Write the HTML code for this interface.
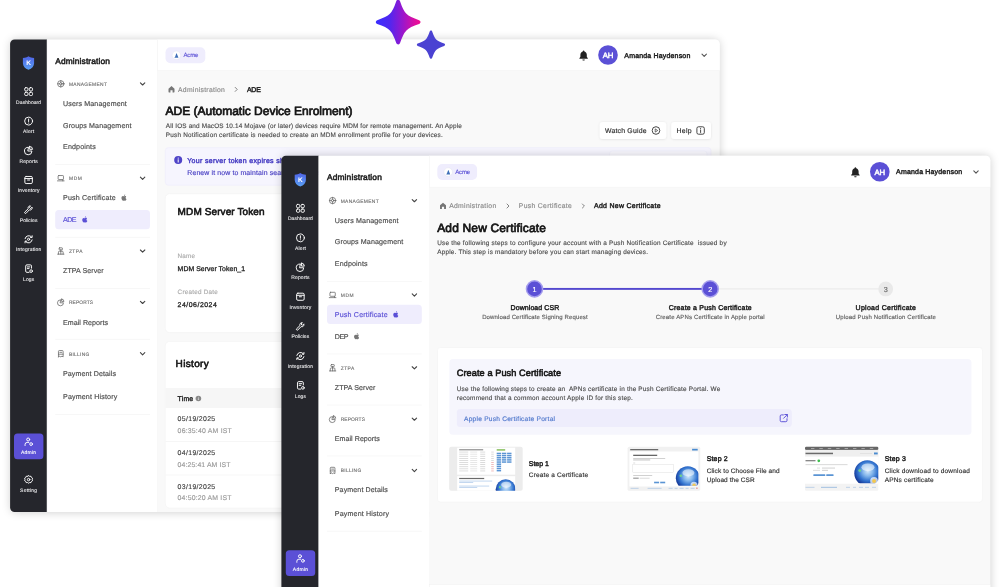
<!DOCTYPE html>
<html lang="en"><head><meta charset="utf-8"><title>Administration</title><style>
*{margin:0;padding:0;}
html,body{width:1000px;height:587px;overflow:hidden;background:#fff;}
body{position:relative;font-family:"Liberation Sans", sans-serif;}
.card{position:absolute;overflow:hidden;}
.sh{position:absolute;border-radius:4.5px;box-shadow:0 0 10px rgba(0,0,0,0.21);}
.tx{position:absolute;left:0;top:0;font-family:"Liberation Sans", sans-serif;text-rendering:geometricPrecision;will-change:transform;} .tx text{white-space:pre;}
.spark{position:absolute;}
svg{display:block;} .tx svg{overflow:visible;}
</style></head><body>
<div class="sh" style="left:10.6px;top:40.0px;width:708.6px;height:471.5px;"></div><div class="card" style="left:9px;top:38px;width:712px;height:475px;"><svg class="tx" width="712" height="475" viewBox="0 0 712 475">
<defs><filter id="bsh" x="-20%" y="-40%" width="140%" height="200%"><feDropShadow dx="0" dy="0.4" stdDeviation="1.1" flood-color="#000" flood-opacity="0.1"/></filter></defs><clipPath id="clipa"><rect x="1.1" y="1.5" width="709.6" height="472.5" rx="4.5"/></clipPath><g clip-path="url(#clipa)">
<rect x="-1" y="-1" width="39" height="477" fill="#25262c" />
<rect x="38" y="-1" width="110.5" height="477" fill="#fff" stroke="#efefef" stroke-width="0.5"/>
<rect x="148.5" y="-1" width="567.5" height="477" fill="#f9f9f9" />
<rect x="148.5" y="-1" width="567.5" height="33.4" fill="#fff" stroke="#f3f3f3" stroke-width="0.5"/>
<svg x="13.5" y="18.0" width="12" height="14" viewBox="0 0 12 14" ><defs><linearGradient id="lga" x1="0" y1="0" x2="0" y2="1"><stop offset="0" stop-color="#4f63e6"/><stop offset="1" stop-color="#5aa0f5"/></linearGradient></defs><path d="M6 .3c1.600 1 3.400 1.500 5.600 1.600v5.300c0 3-2.200 5.300-5.600 6.500C2.600 12.500.4 10.200.4 7.200V1.900C2.600 1.800 4.400 1.300 6 .3z" fill="url(#lga)"/></svg>
<svg x="14.6" y="48.6" width="10" height="10" viewBox="0 0 24 24" ><g stroke="#fff" fill="none" stroke-width="2.3" stroke-linecap="round" stroke-linejoin="round"><rect x="2.600" y="2.600" width="7.800" height="7.800" rx="2.600"/><rect x="13.600" y="2.600" width="7.800" height="7.800" rx="2.600"/><rect x="2.600" y="13.600" width="7.800" height="7.800" rx="2.600"/><rect x="13.600" y="13.600" width="7.800" height="7.800" rx="2.600"/></g></svg>
<svg x="14.6" y="78.1" width="10" height="10" viewBox="0 0 24 24" ><g stroke="#fff" fill="none" stroke-width="2.3" stroke-linecap="round" stroke-linejoin="round"><circle cx="12" cy="12" r="9.5"/><path d="M12 7v6"/><path d="M12 16.6v.2"/></g></svg>
<svg x="14.6" y="107.4" width="10" height="10" viewBox="0 0 24 24" ><g stroke="#fff" fill="none" stroke-width="2.3" stroke-linecap="round" stroke-linejoin="round"><path d="M11 4.5a9 9 0 1 0 9 9h-9z"/><path d="M14.5 2.5v7h7a7 7 0 0 0-7-7z"/></g></svg>
<svg x="14.6" y="137.0" width="10" height="10" viewBox="0 0 24 24" ><g stroke="#fff" fill="none" stroke-width="2.3" stroke-linecap="round" stroke-linejoin="round"><rect x="3" y="3.5" width="18" height="17" rx="3"/><path d="M3 8.5h18"/><path d="M9.500 12h5"/></g></svg>
<svg x="14.6" y="166.8" width="10" height="10" viewBox="0 0 24 24" ><g stroke="#fff" fill="none" stroke-width="2.3" stroke-linecap="round" stroke-linejoin="round"><path d="M20.5 6.5a5 5 0 0 1-6.8 5.6l-7.6 8a2 2 0 0 1-3-3l8-7.6a5 5 0 0 1 5.6-6.8l-3 3.2 2.4 2.6z"/></g></svg>
<svg x="14.6" y="196.3" width="10" height="10" viewBox="0 0 24 24" ><g stroke="#fff" fill="none" stroke-width="2.3" stroke-linecap="round" stroke-linejoin="round"><path d="M3.5 10.5a9 9 0 0 1 16-3.5"/><path d="M20.5 3.5v4h-4"/><path d="M20.5 13.5a9 9 0 0 1-16 3.5"/><path d="M3.5 20.5v-4h4"/><circle cx="12" cy="12" r="2.6"/></g></svg>
<svg x="14.6" y="225.6" width="10" height="10" viewBox="0 0 24 24" ><g stroke="#fff" fill="none" stroke-width="2.3" stroke-linecap="round" stroke-linejoin="round"><path d="M19 11V6a3 3 0 0 0-3-3H8a3 3 0 0 0-3 3v12a3 3 0 0 0 3 3h5"/><path d="M9 8h6"/><path d="M9 12h4"/><circle cx="18" cy="18" r="3.2"/></g></svg>
<rect x="5" y="395.6" width="29.4" height="25.6" rx="3.5" fill="#5b50d6" />
<svg x="14.6" y="398.8" width="10" height="10" viewBox="0 0 24 24" ><g stroke="#fff" fill="none" stroke-width="2.3" stroke-linecap="round" stroke-linejoin="round"><circle cx="11" cy="6.5" r="3.6"/><path d="M3.5 21v-2.5a5 5 0 0 1 5-5h4"/><circle cx="18" cy="17.5" r="3.3"/></g></svg>
<svg x="14.6" y="436.6" width="10" height="10" viewBox="0 0 24 24" ><g stroke="#fff" fill="none" stroke-width="2.3" stroke-linecap="round" stroke-linejoin="round"><path d="M12 2.5l2.6 1.7 3.1-.2 1.2 2.9 2.6 1.7-.8 3 .8 3-2.6 1.7-1.2 2.9-3.1-.2-2.6 1.7-2.6-1.7-3.1.2-1.2-2.9-2.6-1.7.8-3-.8-3 2.6-1.700 1.200-2.900 3.100.200z"/><circle cx="12" cy="12" r="3"/></g></svg>
<svg x="47.8" y="41.8" width="8" height="8" viewBox="0 0 24 24" ><g stroke="#666" fill="none" stroke-width="2.3" stroke-linecap="round" stroke-linejoin="round"><circle cx="12" cy="12" r="9.5"/><circle cx="12" cy="12" r="3.5"/><path d="M12 2.500v6M12 15.500v6M2.500 12h6M15.500 12h6"/></g></svg>
<svg x="128.6" y="40.8" width="10" height="10" viewBox="0 0 10 10" ><path d="M2.800 4l2.200 2.200L7.200 4" stroke="#444" stroke-width="1.100" fill="none" stroke-linecap="round" stroke-linejoin="round"/></svg>
<rect x="46.2" y="126.2" width="94.8" height="0.6" fill="#f2f2f2" />
<svg x="47.8" y="136.2" width="8" height="8" viewBox="0 0 24 24" ><g stroke="#666" fill="none" stroke-width="2.3" stroke-linecap="round" stroke-linejoin="round"><rect x="4" y="4" width="16" height="12" rx="2"/><path d="M2 20h20"/><path d="M18 16v4"/></g></svg>
<svg x="128.6" y="135.2" width="10" height="10" viewBox="0 0 10 10" ><path d="M2.800 4l2.200 2.200L7.200 4" stroke="#444" stroke-width="1.100" fill="none" stroke-linecap="round" stroke-linejoin="round"/></svg>
<svg x="111.9" y="156.2" width="6.6" height="6.6" viewBox="2 2 20 20" ><path d="M16.400 12.600c0-2.300 1.900-3.400 2-3.500-1.100-1.600-2.800-1.800-3.400-1.800-1.400-.1-2.800.9-3.500.9-.7 0-1.900-.8-3.100-.8-1.600 0-3.100.9-3.900 2.400-1.700 2.900-.4 7.200 1.200 9.500.8 1.200 1.700 2.400 3 2.400 1.200 0 1.600-.8 3.100-.8 1.400 0 1.800.8 3.100.8 1.300 0 2.100-1.200 2.900-2.300.9-1.300 1.300-2.600 1.300-2.700-.1 0-2.700-1-2.700-4.100zM14.100 5.600c.6-.8 1.100-1.900 1-3-.9 0-2.100.6-2.800 1.400-.6.700-1.100 1.800-1 2.900 1.100.1 2.100-.5 2.800-1.300z" fill="#777"/></svg>
<rect x="46.2" y="172.0" width="94.8" height="19.2" rx="3.5" fill="#efedfd" />
<svg x="72.7" y="178.1" width="6.6" height="6.6" viewBox="2 2 20 20" ><path d="M16.400 12.600c0-2.300 1.900-3.400 2-3.500-1.100-1.600-2.800-1.800-3.400-1.800-1.400-.1-2.800.9-3.500.9-.7 0-1.900-.8-3.100-.8-1.600 0-3.100.9-3.900 2.400-1.700 2.900-.4 7.200 1.200 9.500.8 1.200 1.700 2.400 3 2.400 1.200 0 1.600-.8 3.100-.8 1.400 0 1.800.8 3.100.8 1.300 0 2.100-1.200 2.900-2.300.9-1.300 1.300-2.600 1.300-2.700-.1 0-2.700-1-2.700-4.100zM14.100 5.600c.6-.8 1.100-1.900 1-3-.9 0-2.100.6-2.800 1.400-.6.700-1.100 1.800-1 2.900 1.100.1 2.100-.5 2.800-1.300z" fill="#5b50d6"/></svg>
<rect x="46.2" y="198.9" width="94.8" height="0.6" fill="#f2f2f2" />
<svg x="47.8" y="209.0" width="8" height="8" viewBox="0 0 24 24" ><g stroke="#666" fill="none" stroke-width="2.3" stroke-linecap="round" stroke-linejoin="round"><rect x="7" y="2.500" width="10" height="6" rx="1.500"/><path d="M12 8.500v4M5 21.500v-6a3 3 0 0 1 3-3h8a3 3 0 0 1 3 3v6M12 12.500v9M2.500 21.500h5M9.500 21.500h5M16.500 21.500h5"/></g></svg>
<svg x="128.6" y="208.0" width="10" height="10" viewBox="0 0 10 10" ><path d="M2.800 4l2.200 2.200L7.200 4" stroke="#444" stroke-width="1.100" fill="none" stroke-linecap="round" stroke-linejoin="round"/></svg>
<rect x="46.2" y="250.0" width="94.8" height="0.6" fill="#f2f2f2" />
<svg x="47.8" y="260.3" width="8" height="8" viewBox="0 0 24 24" ><g stroke="#666" fill="none" stroke-width="2.3" stroke-linecap="round" stroke-linejoin="round"><path d="M11 4.5a9 9 0 1 0 9 9h-9z"/><path d="M14.5 2.5v7h7a7 7 0 0 0-7-7z"/></g></svg>
<svg x="128.6" y="259.3" width="10" height="10" viewBox="0 0 10 10" ><path d="M2.800 4l2.200 2.200L7.200 4" stroke="#444" stroke-width="1.100" fill="none" stroke-linecap="round" stroke-linejoin="round"/></svg>
<rect x="46.2" y="300.9" width="94.8" height="0.6" fill="#f2f2f2" />
<svg x="47.8" y="311.7" width="8" height="8" viewBox="0 0 24 24" ><g stroke="#666" fill="none" stroke-width="2.3" stroke-linecap="round" stroke-linejoin="round"><path d="M5 21.500V5a2.500 2.500 0 0 1 2.500-2.500h9A2.500 2.500 0 0 1 19 5v16.500l-3.500-2-3.500 2-3.500-2z"/><path d="M5 13.500h14"/><path d="M9 8h6"/></g></svg>
<svg x="128.6" y="310.7" width="10" height="10" viewBox="0 0 10 10" ><path d="M2.800 4l2.200 2.200L7.200 4" stroke="#444" stroke-width="1.100" fill="none" stroke-linecap="round" stroke-linejoin="round"/></svg>
<rect x="46.2" y="376.1" width="94.8" height="0.6" fill="#f2f2f2" />
<rect x="156.5" y="9.2" width="39.8" height="16.0" rx="5" fill="#efedfd" />
<svg x="162.9" y="12.8" width="9" height="9" viewBox="0 0 9 9" ><circle cx="4.500" cy="4.500" r="4.250" fill="#fff" stroke="#dcdcec" stroke-width="0.350"/><path d="M4.600 2.200l1.700 3.900H3.100zM2.700 6.300h3.700v.6H2.700z" fill="#3f6fb8"/></svg>
<svg x="569.1" y="11.7" width="11" height="11" viewBox="0 0 12 12" ><path d="M6 .8c-.5 0-.9.4-.9.900v.3C3.500 2.500 2.500 3.900 2.500 5.600v2.200L1.400 9.300c-.2.300 0 .7.400.7h8.400c.4 0 .6-.4.400-.7L9.500 7.800V5.600c0-1.700-1-3.100-2.600-3.600v-.3c0-.5-.4-.9-.9-.9zM4.700 10.600a1.300 1.300 0 0 0 2.600 0z" fill="#222"/></svg>
<rect x="589.2" y="7.2" width="19.6" height="19.6" rx="10" fill="#5b50d6" />
<svg x="690.2" y="12.2" width="10" height="10" viewBox="0 0 10 10" ><path d="M2.800 4l2.200 2.200L7.200 4" stroke="#555" stroke-width="1.100" fill="none" stroke-linecap="round" stroke-linejoin="round"/></svg>
<svg x="158.5" y="47.2" width="8" height="8" viewBox="0 0 12 12" ><path d="M1.500 5.200L6 1.300l4.500 3.900V10a.8.800 0 0 1-.8.800H7.600V7.400H4.400v3.400H2.300a.8.800 0 0 1-.8-.8z" fill="#777"/></svg>
<svg x="223.0" y="47.4" width="8" height="8" viewBox="0 0 8 8" ><path d="M3.200 2l2 2-2 2" stroke="#666" stroke-width="0.800" fill="none" stroke-linecap="round" stroke-linejoin="round"/></svg>
<rect x="590.7" y="84" width="66.5" height="17" rx="3" fill="#fff" filter="url(#bsh)"/>
<svg x="642.5" y="88.0" width="9" height="9" viewBox="0 0 9 9" ><circle cx="4.500" cy="4.500" r="3.800" stroke="#333" stroke-width="0.900" fill="none"/><path d="M3.700 2.900l2.500 1.600-2.500 1.600z" stroke="#333" stroke-width="0.700" fill="none" stroke-linejoin="round"/></svg>
<rect x="662.3" y="84" width="39.7" height="17" rx="3" fill="#fff" filter="url(#bsh)"/>
<svg x="687.1" y="88.0" width="9" height="9" viewBox="0 0 9 9" ><rect x="0.800" y="0.800" width="7.400" height="7.400" rx="1.600" stroke="#333" stroke-width="0.900" fill="none"/><path d="M4.500 4v2.500" stroke="#333" stroke-width="0.900" stroke-linecap="round"/><circle cx="4.500" cy="2.600" r="0.550" fill="#333"/></svg>
<rect x="156.3" y="109.6" width="545.7" height="37.6" rx="3" fill="#f6f5fe" stroke="#ecebfa" stroke-width="0.5"/>
<rect x="600.5" y="113" width="97.5" height="19" rx="3" fill="#fff" fill-opacity="0.3" stroke="#eceafa" stroke-width="0.4"/>
<svg x="165.2" y="118.1" width="8" height="8" viewBox="0 0 8 8" ><circle cx="4" cy="4" r="4" fill="#4f44c8"/><path d="M4 3.600v2.400" stroke="#fff" stroke-width="1" stroke-linecap="round"/><circle cx="4" cy="2" r="0.600" fill="#fff"/></svg>
<rect x="156.3" y="155.7" width="545.7" height="138.9" rx="4.5" fill="#fff" stroke="#f0f0f0" stroke-width="0.5"/>
<rect x="156.3" y="303.4" width="545.7" height="166.6" rx="4.5" fill="#fff" stroke="#f0f0f0" stroke-width="0.5"/>
<rect x="156.6" y="350" width="545.1" height="20" fill="#f6f6f6" />
<svg x="186.4" y="357.5" width="6" height="6" viewBox="0 0 6 6" ><circle cx="3" cy="3" r="2.800" fill="#888"/><path d="M3 2.800v1.600" stroke="#fff" stroke-width="0.700"/><circle cx="3" cy="1.700" r="0.400" fill="#fff"/></svg>
<rect x="156.6" y="403.0" width="545.1" height="0.6" fill="#f1f1f1" />
<rect x="156.6" y="436.7" width="545.1" height="0.6" fill="#f1f1f1" />
<text x="19.6" y="27.38" font-size="6.6" fill="#fff" font-weight="700" text-anchor="middle">K</text>
<text x="19.6" y="65.7" font-size="5.0" fill="#e4e4e6" stroke="#e4e4e6" stroke-width="0.11" text-anchor="middle" textLength="25">Dashboard</text>
<text x="19.6" y="95.1" font-size="5.0" fill="#e4e4e6" stroke="#e4e4e6" stroke-width="0.11" text-anchor="middle" textLength="11">Alert</text>
<text x="19.6" y="124.7" font-size="5.0" fill="#e4e4e6" stroke="#e4e4e6" stroke-width="0.11" text-anchor="middle" textLength="18.4">Reports</text>
<text x="19.6" y="154.2" font-size="5.0" fill="#e4e4e6" stroke="#e4e4e6" stroke-width="0.11" text-anchor="middle" textLength="21.9">Inventory</text>
<text x="19.6" y="183.6" font-size="5.0" fill="#e4e4e6" stroke="#e4e4e6" stroke-width="0.11" text-anchor="middle" textLength="17.6">Policies</text>
<text x="19.6" y="213.2" font-size="5.0" fill="#e4e4e6" stroke="#e4e4e6" stroke-width="0.11" text-anchor="middle" textLength="25.2">Integration</text>
<text x="19.6" y="242.8" font-size="5.0" fill="#e4e4e6" stroke="#e4e4e6" stroke-width="0.11" text-anchor="middle" textLength="11.2">Logs</text>
<text x="19.6" y="415.9" font-size="5.0" fill="#fff" stroke="#fff" stroke-width="0.11" text-anchor="middle" textLength="15.1">Admin</text>
<text x="19.6" y="453.7" font-size="5.0" fill="#e4e4e6" stroke="#e4e4e6" stroke-width="0.11" text-anchor="middle" textLength="17">Setting</text>
<text x="46.2" y="25.72" font-size="8.4" fill="#1c1c1c" stroke="#1c1c1c" stroke-width="0.5" stroke-linejoin="round" textLength="54.8">Administration</text>
<text x="59.9" y="47.76" font-size="4.9" fill="#6c6c6c" stroke="#6c6c6c" stroke-width="0.11" textLength="38">MANAGEMENT</text>
<text x="54" y="67.96" font-size="7.1" fill="#4c4c4c" stroke="#4c4c4c" stroke-width="0.16" textLength="63.8">Users Management</text>
<text x="54" y="89.56" font-size="7.1" fill="#4c4c4c" stroke="#4c4c4c" stroke-width="0.16" textLength="68.5">Groups Management</text>
<text x="54" y="111.26" font-size="7.1" fill="#4c4c4c" stroke="#4c4c4c" stroke-width="0.16" textLength="32.8">Endpoints</text>
<text x="59.9" y="142.16" font-size="4.9" fill="#6c6c6c" stroke="#6c6c6c" stroke-width="0.11" textLength="13">MDM</text>
<text x="54" y="162.26" font-size="7.1" fill="#4c4c4c" stroke="#4c4c4c" stroke-width="0.16" textLength="52.8">Push Certificate</text>
<text x="54" y="184.16" font-size="7.1" fill="#5b50d6" stroke="#5b50d6" stroke-width="0.16" textLength="13.6">ADE</text>
<text x="59.9" y="214.96" font-size="4.9" fill="#6c6c6c" stroke="#6c6c6c" stroke-width="0.11" textLength="13.5">ZTPA</text>
<text x="54" y="235.16" font-size="7.1" fill="#4c4c4c" stroke="#4c4c4c" stroke-width="0.16" textLength="40.6">ZTPA Server</text>
<text x="59.9" y="266.26" font-size="4.9" fill="#6c6c6c" stroke="#6c6c6c" stroke-width="0.11" textLength="24.2">REPORTS</text>
<text x="54" y="286.56" font-size="7.1" fill="#4c4c4c" stroke="#4c4c4c" stroke-width="0.16" textLength="45">Email Reports</text>
<text x="59.9" y="317.66" font-size="4.9" fill="#6c6c6c" stroke="#6c6c6c" stroke-width="0.11" textLength="20.5">BILLING</text>
<text x="54" y="337.56" font-size="7.1" fill="#4c4c4c" stroke="#4c4c4c" stroke-width="0.16" textLength="53">Payment Details</text>
<text x="54" y="361.36" font-size="7.1" fill="#4c4c4c" stroke="#4c4c4c" stroke-width="0.16" textLength="54.2">Payment History</text>
<text x="174.4" y="19.4" font-size="6.1" fill="#5b50d6" stroke="#5b50d6" stroke-width="0.13" textLength="15">Acme</text>
<text x="599" y="20.01" font-size="7.8" fill="#fff" stroke="#fff" stroke-width="0.47" stroke-linejoin="round" text-anchor="middle" textLength="10.6">AH</text>
<text x="615.3" y="19.62" font-size="7.0" fill="#1c1c1c" stroke="#1c1c1c" stroke-width="0.42" stroke-linejoin="round" textLength="66">Amanda Haydenson</text>
<text x="169" y="53.75" font-size="6.8" fill="#8a8a8a" stroke="#8a8a8a" stroke-width="0.15" textLength="46.8">Administration</text>
<text x="238" y="53.82" font-size="7.0" fill="#222" stroke="#222" stroke-width="0.42" stroke-linejoin="round" textLength="13.8">ADE</text>
<text x="156.6" y="76.72" font-size="12.0" fill="#151515" stroke="#151515" stroke-width="0.72" stroke-linejoin="round" textLength="187">ADE (Automatic Device Enrolment)</text>
<text x="156.8" y="90.4" font-size="6.4" fill="#4c4c4c" stroke="#4c4c4c" stroke-width="0.14" textLength="296">All IOS and MacOS 10.14 Mojave (or later) devices require MDM for remote management. An Apple</text>
<text x="156.8" y="99.4" font-size="6.4" fill="#4c4c4c" stroke="#4c4c4c" stroke-width="0.14" textLength="277">Push Notification certificate is needed to create an MDM enrollment profile for your devices.</text>
<text x="596" y="94.98" font-size="6.9" fill="#2a2a2a" stroke="#2a2a2a" stroke-width="0.15" textLength="41.5">Watch Guide</text>
<text x="667.6" y="94.98" font-size="6.9" fill="#2a2a2a" stroke="#2a2a2a" stroke-width="0.15" textLength="15">Help</text>
<text x="178.3" y="124.62" font-size="7.0" fill="#4a40c4" stroke="#4a40c4" stroke-width="0.42" stroke-linejoin="round" textLength="113">Your server token expires shortly.</text>
<text x="178.3" y="137.28" font-size="6.9" fill="#4a40c4" stroke="#4a40c4" stroke-width="0.15" textLength="181">Renew it now to maintain seamless device management.</text>
<text x="168.6" y="177.0" font-size="10.0" fill="#151515" stroke="#151515" stroke-width="0.6" stroke-linejoin="round" textLength="87">MDM Server Token</text>
<text x="168.6" y="219.87" font-size="6.3" fill="#aaa" stroke="#aaa" stroke-width="0.14" textLength="17.4">Name</text>
<text x="168.6" y="233.08" font-size="6.9" fill="#1c1c1c" stroke="#1c1c1c" stroke-width="0.28" textLength="67.4">MDM Server Token_1</text>
<text x="168.6" y="256.07" font-size="6.3" fill="#aaa" stroke="#aaa" stroke-width="0.14" textLength="40.2">Created Date</text>
<text x="168.6" y="269.08" font-size="6.9" fill="#1c1c1c" stroke="#1c1c1c" stroke-width="0.28" textLength="39.2">24/06/2024</text>
<text x="166.6" y="328.5" font-size="10.0" fill="#151515" stroke="#151515" stroke-width="0.6" stroke-linejoin="round" textLength="33.2">History</text>
<text x="168.6" y="362.88" font-size="6.9" fill="#2a2a2a" stroke="#2a2a2a" stroke-width="0.41" stroke-linejoin="round" textLength="15.6">Time</text>
<text x="168.6" y="383.38" font-size="6.9" fill="#444" stroke="#444" stroke-width="0.15" textLength="37.6">05/19/2025</text>
<text x="168.6" y="395.28" font-size="6.9" fill="#9a9a9a" stroke="#9a9a9a" stroke-width="0.15" textLength="54.2">06:35:40 AM IST</text>
<text x="168.6" y="417.08" font-size="6.9" fill="#444" stroke="#444" stroke-width="0.15" textLength="37.6">04/19/2025</text>
<text x="168.6" y="428.88" font-size="6.9" fill="#9a9a9a" stroke="#9a9a9a" stroke-width="0.15" textLength="52.8">04:25:41 AM IST</text>
<text x="168.6" y="450.58" font-size="6.9" fill="#444" stroke="#444" stroke-width="0.15" textLength="37.6">03/19/2025</text>
<text x="168.6" y="462.38" font-size="6.9" fill="#9a9a9a" stroke="#9a9a9a" stroke-width="0.15" textLength="53.8">04:50:20 AM IST</text>
</g></svg></div>
<svg class="spark" style="left:370px;top:0px" width="80" height="64" viewBox="370 0 80 64"><defs><linearGradient id="sg" gradientUnits="userSpaceOnUse" x1="376" y1="0" x2="420.5" y2="0"><stop offset="0" stop-color="#3a2dff"/><stop offset="0.3" stop-color="#4f27f0"/><stop offset="0.6" stop-color="#9a16cc"/><stop offset="0.85" stop-color="#d80fa4"/><stop offset="1" stop-color="#f00d92"/></linearGradient></defs><path d="M398.15 1.80 C402.41 14.79 405.46 17.84 418.45 22.10 C405.46 26.36 402.41 29.41 398.15 42.40 C393.89 29.41 390.84 26.36 377.85 22.10 C390.84 17.84 393.89 14.79 398.15 1.80Z" fill="url(#sg)" stroke="url(#sg)" stroke-width="4.0" stroke-linejoin="round"/><path d="M430.95 31.85 C433.64 40.04 435.56 41.96 443.75 44.65 C435.56 47.34 433.64 49.26 430.95 57.45 C428.26 49.26 426.34 47.34 418.15 44.65 C426.34 41.96 428.26 40.04 430.95 31.85Z" fill="#4b42d2" stroke="#4b42d2" stroke-width="2.6" stroke-linejoin="round"/></svg>
<div class="sh" style="left:281.9px;top:156.3px;width:707.9px;height:472.2px;"></div><div class="card" style="left:280px;top:155px;width:712px;height:475px;"><svg class="tx" width="712" height="475" viewBox="0 0 712 475">
<clipPath id="clipb"><rect x="1.4" y="0.8" width="708.9" height="473.2" rx="4.5"/></clipPath><g clip-path="url(#clipb)">
<rect x="-0.2" y="-1.25" width="39.0" height="477.0" fill="#25262c" />
<rect x="38.8" y="-1.25" width="110.5" height="477.0" fill="#fff" stroke="#efefef" stroke-width="0.5"/>
<rect x="149.3" y="-1.25" width="567.5" height="477.0" fill="#f9f9f9" />
<rect x="149.3" y="-1.25" width="567.5" height="33.4" fill="#fff" stroke="#f3f3f3" stroke-width="0.5"/>
<svg x="14.3" y="17.75" width="12" height="14" viewBox="0 0 12 14" ><defs><linearGradient id="lgb" x1="0" y1="0" x2="0" y2="1"><stop offset="0" stop-color="#4f63e6"/><stop offset="1" stop-color="#5aa0f5"/></linearGradient></defs><path d="M6 .3c1.600 1 3.400 1.500 5.600 1.600v5.300c0 3-2.200 5.300-5.600 6.500C2.600 12.500.4 10.200.4 7.200V1.900C2.600 1.800 4.400 1.300 6 .3z" fill="url(#lgb)"/></svg>
<svg x="15.4" y="48.35" width="10" height="10" viewBox="0 0 24 24" ><g stroke="#fff" fill="none" stroke-width="2.3" stroke-linecap="round" stroke-linejoin="round"><rect x="2.600" y="2.600" width="7.800" height="7.800" rx="2.600"/><rect x="13.600" y="2.600" width="7.800" height="7.800" rx="2.600"/><rect x="2.600" y="13.600" width="7.800" height="7.800" rx="2.600"/><rect x="13.600" y="13.600" width="7.800" height="7.800" rx="2.600"/></g></svg>
<svg x="15.4" y="77.85" width="10" height="10" viewBox="0 0 24 24" ><g stroke="#fff" fill="none" stroke-width="2.3" stroke-linecap="round" stroke-linejoin="round"><circle cx="12" cy="12" r="9.5"/><path d="M12 7v6"/><path d="M12 16.6v.2"/></g></svg>
<svg x="15.4" y="107.15" width="10" height="10" viewBox="0 0 24 24" ><g stroke="#fff" fill="none" stroke-width="2.3" stroke-linecap="round" stroke-linejoin="round"><path d="M11 4.5a9 9 0 1 0 9 9h-9z"/><path d="M14.5 2.5v7h7a7 7 0 0 0-7-7z"/></g></svg>
<svg x="15.4" y="136.75" width="10" height="10" viewBox="0 0 24 24" ><g stroke="#fff" fill="none" stroke-width="2.3" stroke-linecap="round" stroke-linejoin="round"><rect x="3" y="3.5" width="18" height="17" rx="3"/><path d="M3 8.5h18"/><path d="M9.500 12h5"/></g></svg>
<svg x="15.4" y="166.55" width="10" height="10" viewBox="0 0 24 24" ><g stroke="#fff" fill="none" stroke-width="2.3" stroke-linecap="round" stroke-linejoin="round"><path d="M20.5 6.5a5 5 0 0 1-6.8 5.6l-7.6 8a2 2 0 0 1-3-3l8-7.6a5 5 0 0 1 5.6-6.8l-3 3.2 2.4 2.6z"/></g></svg>
<svg x="15.4" y="196.05" width="10" height="10" viewBox="0 0 24 24" ><g stroke="#fff" fill="none" stroke-width="2.3" stroke-linecap="round" stroke-linejoin="round"><path d="M3.5 10.5a9 9 0 0 1 16-3.5"/><path d="M20.5 3.5v4h-4"/><path d="M20.5 13.5a9 9 0 0 1-16 3.5"/><path d="M3.5 20.5v-4h4"/><circle cx="12" cy="12" r="2.6"/></g></svg>
<svg x="15.4" y="225.35" width="10" height="10" viewBox="0 0 24 24" ><g stroke="#fff" fill="none" stroke-width="2.3" stroke-linecap="round" stroke-linejoin="round"><path d="M19 11V6a3 3 0 0 0-3-3H8a3 3 0 0 0-3 3v12a3 3 0 0 0 3 3h5"/><path d="M9 8h6"/><path d="M9 12h4"/><circle cx="18" cy="18" r="3.2"/></g></svg>
<rect x="5.8" y="395.35" width="29.4" height="25.6" rx="3.5" fill="#5b50d6" />
<svg x="15.4" y="398.55" width="10" height="10" viewBox="0 0 24 24" ><g stroke="#fff" fill="none" stroke-width="2.3" stroke-linecap="round" stroke-linejoin="round"><circle cx="11" cy="6.5" r="3.6"/><path d="M3.5 21v-2.5a5 5 0 0 1 5-5h4"/><circle cx="18" cy="17.5" r="3.3"/></g></svg>
<svg x="15.4" y="436.35" width="10" height="10" viewBox="0 0 24 24" ><g stroke="#fff" fill="none" stroke-width="2.3" stroke-linecap="round" stroke-linejoin="round"><path d="M12 2.5l2.6 1.7 3.1-.2 1.2 2.9 2.6 1.7-.8 3 .8 3-2.6 1.7-1.2 2.9-3.1-.2-2.6 1.7-2.6-1.7-3.1.2-1.2-2.9-2.6-1.7.8-3-.8-3 2.6-1.700 1.200-2.900 3.100.200z"/><circle cx="12" cy="12" r="3"/></g></svg>
<svg x="48.6" y="41.55" width="8" height="8" viewBox="0 0 24 24" ><g stroke="#666" fill="none" stroke-width="2.3" stroke-linecap="round" stroke-linejoin="round"><circle cx="12" cy="12" r="9.5"/><circle cx="12" cy="12" r="3.5"/><path d="M12 2.500v6M12 15.500v6M2.500 12h6M15.500 12h6"/></g></svg>
<svg x="129.4" y="40.55" width="10" height="10" viewBox="0 0 10 10" ><path d="M2.800 4l2.200 2.200L7.200 4" stroke="#444" stroke-width="1.100" fill="none" stroke-linecap="round" stroke-linejoin="round"/></svg>
<rect x="47.0" y="125.95" width="94.8" height="0.6" fill="#f2f2f2" />
<svg x="48.6" y="135.95" width="8" height="8" viewBox="0 0 24 24" ><g stroke="#666" fill="none" stroke-width="2.3" stroke-linecap="round" stroke-linejoin="round"><rect x="4" y="4" width="16" height="12" rx="2"/><path d="M2 20h20"/><path d="M18 16v4"/></g></svg>
<svg x="129.4" y="134.95" width="10" height="10" viewBox="0 0 10 10" ><path d="M2.800 4l2.200 2.200L7.200 4" stroke="#444" stroke-width="1.100" fill="none" stroke-linecap="round" stroke-linejoin="round"/></svg>
<rect x="47.0" y="149.85" width="94.8" height="19.2" rx="3.5" fill="#efedfd" />
<svg x="112.7" y="155.95" width="6.6" height="6.6" viewBox="2 2 20 20" ><path d="M16.400 12.600c0-2.300 1.900-3.400 2-3.500-1.100-1.600-2.800-1.800-3.400-1.800-1.400-.1-2.800.9-3.500.9-.7 0-1.900-.8-3.100-.8-1.600 0-3.100.9-3.900 2.400-1.700 2.900-.4 7.200 1.200 9.500.8 1.200 1.700 2.400 3 2.400 1.200 0 1.600-.8 3.100-.8 1.400 0 1.800.8 3.100.8 1.300 0 2.100-1.200 2.900-2.300.9-1.300 1.300-2.600 1.300-2.700-.1 0-2.700-1-2.700-4.100zM14.100 5.600c.6-.8 1.100-1.900 1-3-.9 0-2.100.6-2.800 1.400-.6.700-1.100 1.800-1 2.900 1.100.1 2.100-.5 2.800-1.300z" fill="#5b50d6"/></svg>
<svg x="73.5" y="177.85" width="6.6" height="6.6" viewBox="2 2 20 20" ><path d="M16.400 12.600c0-2.300 1.900-3.400 2-3.500-1.100-1.600-2.800-1.800-3.400-1.800-1.400-.1-2.800.9-3.500.9-.7 0-1.900-.8-3.100-.8-1.600 0-3.100.9-3.900 2.400-1.700 2.900-.4 7.200 1.200 9.500.8 1.200 1.700 2.400 3 2.400 1.200 0 1.600-.8 3.100-.8 1.400 0 1.800.8 3.100.8 1.300 0 2.100-1.200 2.900-2.300.9-1.300 1.300-2.600 1.300-2.700-.1 0-2.700-1-2.700-4.100zM14.100 5.600c.6-.8 1.100-1.900 1-3-.9 0-2.100.6-2.800 1.400-.6.700-1.100 1.800-1 2.900 1.100.1 2.100-.5 2.800-1.300z" fill="#777"/></svg>
<rect x="47.0" y="198.65" width="94.8" height="0.6" fill="#f2f2f2" />
<svg x="48.6" y="208.75" width="8" height="8" viewBox="0 0 24 24" ><g stroke="#666" fill="none" stroke-width="2.3" stroke-linecap="round" stroke-linejoin="round"><rect x="7" y="2.500" width="10" height="6" rx="1.500"/><path d="M12 8.500v4M5 21.500v-6a3 3 0 0 1 3-3h8a3 3 0 0 1 3 3v6M12 12.500v9M2.500 21.500h5M9.500 21.500h5M16.500 21.500h5"/></g></svg>
<svg x="129.4" y="207.75" width="10" height="10" viewBox="0 0 10 10" ><path d="M2.800 4l2.200 2.200L7.200 4" stroke="#444" stroke-width="1.100" fill="none" stroke-linecap="round" stroke-linejoin="round"/></svg>
<rect x="47.0" y="249.75" width="94.8" height="0.6" fill="#f2f2f2" />
<svg x="48.6" y="260.05" width="8" height="8" viewBox="0 0 24 24" ><g stroke="#666" fill="none" stroke-width="2.3" stroke-linecap="round" stroke-linejoin="round"><path d="M11 4.5a9 9 0 1 0 9 9h-9z"/><path d="M14.5 2.5v7h7a7 7 0 0 0-7-7z"/></g></svg>
<svg x="129.4" y="259.05" width="10" height="10" viewBox="0 0 10 10" ><path d="M2.800 4l2.200 2.200L7.200 4" stroke="#444" stroke-width="1.100" fill="none" stroke-linecap="round" stroke-linejoin="round"/></svg>
<rect x="47.0" y="300.65" width="94.8" height="0.6" fill="#f2f2f2" />
<svg x="48.6" y="311.45" width="8" height="8" viewBox="0 0 24 24" ><g stroke="#666" fill="none" stroke-width="2.3" stroke-linecap="round" stroke-linejoin="round"><path d="M5 21.500V5a2.500 2.500 0 0 1 2.500-2.500h9A2.500 2.500 0 0 1 19 5v16.500l-3.500-2-3.500 2-3.500-2z"/><path d="M5 13.500h14"/><path d="M9 8h6"/></g></svg>
<svg x="129.4" y="310.45" width="10" height="10" viewBox="0 0 10 10" ><path d="M2.800 4l2.200 2.200L7.200 4" stroke="#444" stroke-width="1.100" fill="none" stroke-linecap="round" stroke-linejoin="round"/></svg>
<rect x="47.0" y="375.85" width="94.8" height="0.6" fill="#f2f2f2" />
<rect x="157.3" y="8.95" width="39.8" height="16.0" rx="5" fill="#efedfd" />
<svg x="163.7" y="12.55" width="9" height="9" viewBox="0 0 9 9" ><circle cx="4.500" cy="4.500" r="4.250" fill="#fff" stroke="#dcdcec" stroke-width="0.350"/><path d="M4.600 2.200l1.700 3.900H3.100zM2.700 6.300h3.700v.6H2.700z" fill="#3f6fb8"/></svg>
<svg x="569.9" y="11.45" width="11" height="11" viewBox="0 0 12 12" ><path d="M6 .8c-.5 0-.9.4-.9.900v.3C3.500 2.500 2.500 3.900 2.500 5.600v2.200L1.400 9.300c-.2.300 0 .7.400.7h8.400c.4 0 .6-.4.400-.7L9.500 7.800V5.600c0-1.700-1-3.100-2.600-3.600v-.3c0-.5-.4-.9-.9-.9zM4.700 10.600a1.300 1.300 0 0 0 2.600 0z" fill="#222"/></svg>
<rect x="590.0" y="6.95" width="19.6" height="19.6" rx="10" fill="#5b50d6" />
<svg x="691.0" y="11.95" width="10" height="10" viewBox="0 0 10 10" ><path d="M2.800 4l2.200 2.200L7.200 4" stroke="#555" stroke-width="1.100" fill="none" stroke-linecap="round" stroke-linejoin="round"/></svg>
<svg x="159.0" y="46.8" width="8" height="8" viewBox="0 0 12 12" ><path d="M1.500 5.200L6 1.300l4.500 3.900V10a.8.800 0 0 1-.8.800H7.600V7.400H4.400v3.400H2.300a.8.800 0 0 1-.8-.8z" fill="#777"/></svg>
<svg x="223.8" y="47.0" width="8" height="8" viewBox="0 0 8 8" ><path d="M3.200 2l2 2-2 2" stroke="#666" stroke-width="0.800" fill="none" stroke-linecap="round" stroke-linejoin="round"/></svg>
<svg x="299.2" y="47.0" width="8" height="8" viewBox="0 0 8 8" ><path d="M3.200 2l2 2-2 2" stroke="#666" stroke-width="0.800" fill="none" stroke-linecap="round" stroke-linejoin="round"/></svg>
<rect x="254.5" y="132.95" width="175.7" height="1.9" fill="#5448cf" />
<rect x="430.2" y="133.2" width="175.5" height="1.4" fill="#ededed" />
<rect x="245.7" y="125.1" width="17.6" height="17.6" rx="8.8" fill="#a59eed" />
<rect x="247.2" y="126.6" width="14.6" height="14.6" rx="7.3" fill="#5b50d6" />
<rect x="421.4" y="125.1" width="17.6" height="17.6" rx="8.8" fill="#a59eed" />
<rect x="422.9" y="126.6" width="14.6" height="14.6" rx="7.3" fill="#5b50d6" />
<rect x="598.3" y="126.5" width="14.8" height="14.8" rx="8" fill="#e9e9e9" />
<rect x="157.5" y="192.5" width="544.9" height="154.5" rx="3" fill="#fff" stroke="#f0f0f0" stroke-width="0.5"/>
<rect x="169.4" y="204" width="522.0" height="75.7" rx="3.5" fill="#f6f6fd" />
<rect x="176.8" y="254" width="335.0" height="18" rx="3.5" fill="#eeedfc" />
<svg x="498.8" y="258.1" width="10" height="10" viewBox="0 0 10 10" ><path d="M4.600 1.800H2.600A1.200 1.200 0 0 0 1.400 3v4.400a1.200 1.200 0 0 0 1.200 1.200H7a1.200 1.200 0 0 0 1.200-1.200V5.600" stroke="#5b50d6" stroke-width="0.950" fill="none" stroke-linecap="round"/><path d="M6 1.400h2.600V4M8.500 1.500L4.800 5.200" stroke="#5b50d6" stroke-width="0.950" fill="none" stroke-linecap="round" stroke-linejoin="round"/></svg>
<svg x="169.2" y="291.6" width="73.5" height="44.2" viewBox="0 0 73.5 44"><rect width="73.500" height="44" rx="2" fill="#ececec"/><rect x="8" y="1" width="58" height="27" fill="#fff"/><rect x="8" y="29.500" width="58" height="14.500" fill="#fff"/><rect x="10" y="2.600" width="24" height="1" fill="#7a7a7a"/><rect x="10" y="5.0" width="9" height="0.700" fill="#cfcfcf"/><rect x="21" y="5.0" width="7" height="0.700" fill="#ddd"/><rect x="31" y="5.0" width="5" height="0.700" fill="#ccc"/><rect x="42" y="5.0" width="2.600" height="0.700" fill="#ccc"/><rect x="10" y="7.1" width="9" height="0.700" fill="#cfcfcf"/><rect x="21" y="7.1" width="7" height="0.700" fill="#ddd"/><rect x="31" y="7.1" width="5" height="0.700" fill="#ccc"/><rect x="42" y="7.1" width="2.600" height="0.700" fill="#ccc"/><rect x="10" y="9.2" width="9" height="0.700" fill="#cfcfcf"/><rect x="21" y="9.2" width="7" height="0.700" fill="#ddd"/><rect x="31" y="9.2" width="5" height="0.700" fill="#ccc"/><rect x="42" y="9.2" width="2.600" height="0.700" fill="#ccc"/><rect x="10" y="11.3" width="9" height="0.700" fill="#cfcfcf"/><rect x="21" y="11.3" width="7" height="0.700" fill="#ddd"/><rect x="31" y="11.3" width="5" height="0.700" fill="#ccc"/><rect x="42" y="11.3" width="2.600" height="0.700" fill="#ccc"/><rect x="10" y="13.4" width="9" height="0.700" fill="#cfcfcf"/><rect x="21" y="13.4" width="7" height="0.700" fill="#ddd"/><rect x="31" y="13.4" width="5" height="0.700" fill="#ccc"/><rect x="42" y="13.4" width="2.600" height="0.700" fill="#ccc"/><rect x="10" y="15.5" width="9" height="0.700" fill="#cfcfcf"/><rect x="21" y="15.5" width="7" height="0.700" fill="#ddd"/><rect x="31" y="15.5" width="5" height="0.700" fill="#ccc"/><rect x="42" y="15.5" width="2.600" height="0.700" fill="#e9a0a0"/><rect x="10" y="17.6" width="9" height="0.700" fill="#cfcfcf"/><rect x="21" y="17.6" width="7" height="0.700" fill="#ddd"/><rect x="31" y="17.6" width="5" height="0.700" fill="#ccc"/><rect x="42" y="17.6" width="2.600" height="0.700" fill="#e9a0a0"/><rect x="10" y="19.7" width="9" height="0.700" fill="#cfcfcf"/><rect x="21" y="19.7" width="7" height="0.700" fill="#ddd"/><rect x="31" y="19.7" width="5" height="0.700" fill="#ccc"/><rect x="42" y="19.7" width="2.600" height="0.700" fill="#e9a0a0"/><rect x="10" y="21.8" width="9" height="0.700" fill="#cfcfcf"/><rect x="21" y="21.8" width="7" height="0.700" fill="#ddd"/><rect x="31" y="21.8" width="5" height="0.700" fill="#ccc"/><rect x="42" y="21.8" width="2.600" height="0.700" fill="#e9a0a0"/><rect x="10" y="23.9" width="9" height="0.700" fill="#cfcfcf"/><rect x="21" y="23.9" width="7" height="0.700" fill="#ddd"/><rect x="31" y="23.9" width="5" height="0.700" fill="#ccc"/><rect x="42" y="23.9" width="2.600" height="0.700" fill="#e9a0a0"/><rect x="47.500" y="2.400" width="8.500" height="1.600" fill="#8fc46a"/><rect x="47.5" y="6.00" width="4.400" height="1.500" fill="#5a94d4"/><rect x="52.7" y="6.00" width="4.400" height="1.500" fill="#5a94d4"/><rect x="57.9" y="6.00" width="4.400" height="1.500" fill="#5a94d4"/><rect x="47.5" y="8.15" width="4.400" height="1.500" fill="#5a94d4"/><rect x="52.7" y="8.15" width="4.400" height="1.500" fill="#5a94d4"/><rect x="57.9" y="8.15" width="4.400" height="1.500" fill="#5a94d4"/><rect x="47.5" y="10.30" width="4.400" height="1.500" fill="#5a94d4"/><rect x="52.7" y="10.30" width="4.400" height="1.500" fill="#5a94d4"/><rect x="57.9" y="10.30" width="4.400" height="1.500" fill="#5a94d4"/><rect x="47.5" y="12.45" width="4.400" height="1.500" fill="#5a94d4"/><rect x="52.7" y="12.45" width="4.400" height="1.500" fill="#5a94d4"/><rect x="57.9" y="12.45" width="4.400" height="1.500" fill="#5a94d4"/><rect x="47.5" y="14.60" width="4.400" height="1.500" fill="#5a94d4"/><rect x="52.7" y="14.60" width="4.400" height="1.500" fill="#5a94d4"/><rect x="57.9" y="14.60" width="4.400" height="1.500" fill="#5a94d4"/><rect x="47.500" y="16.75" width="4.400" height="1.500" fill="#5a94d4"/><rect x="47.500" y="18.90" width="4.400" height="1.500" fill="#5a94d4"/><rect x="47.500" y="21.05" width="4.400" height="1.500" fill="#5a94d4"/><rect x="47.500" y="23.20" width="4.400" height="1.500" fill="#5a94d4"/><rect x="10" y="31.200" width="25" height="1.200" fill="#6a6a6a"/><rect x="10" y="34" width="33" height="0.700" fill="#a9c6e8"/><rect x="10" y="35.600" width="14" height="0.700" fill="#a9c6e8"/><rect x="10" y="39" width="30" height="0.700" fill="#a9c6e8"/><rect x="10" y="40.600" width="18" height="0.700" fill="#a9c6e8"/><clipPath id="cp1"><rect x="8" y="29.500" width="58" height="14.500"/></clipPath><g clip-path="url(#cp1)"><defs><radialGradient id="gl1" cx="0.52" cy="0.42" r="0.62"><stop offset="0" stop-color="#d4e8fa"/><stop offset="0.3" stop-color="#86b8ec"/><stop offset="0.6" stop-color="#3374cf"/><stop offset="0.84" stop-color="#173f9f"/><stop offset="1" stop-color="#0e2878"/></radialGradient></defs><circle cx="56.5" cy="42.5" r="10" fill="url(#gl1)"/><ellipse cx="57.00" cy="38.00" rx="5.00" ry="3.00" fill="#fff" opacity="0.55"/><circle cx="50.70" cy="40.50" r="1.10" fill="#6fd08a"/><circle cx="61.70" cy="48.50" r="3.00" fill="#fff" opacity="0.7"/><circle cx="61.70" cy="48.50" r="1.50" fill="#f4c84e"/></g></svg>
<svg x="347.6" y="291.6" width="72.6" height="44.2" viewBox="0 0 72.6 44"><rect width="72.600" height="44" rx="1.500" fill="#f1f1f1"/><rect x="1.800" y="4.800" width="69" height="35" fill="#fff"/><rect x="2.600" y="2.300" width="28" height="1.300" fill="#6a6a6a"/><rect x="64.500" y="2.100" width="5.600" height="1.700" fill="#4a8bd0"/><rect x="5.600" y="8" width="24" height="1.300" fill="#666"/><rect x="5.600" y="11.400" width="32" height="0.700" fill="#bdbdbd"/><rect x="5.600" y="12.900" width="17" height="0.700" fill="#a5a5a5"/><rect x="5.600" y="16" width="2" height="0.600" fill="#c8c8c8"/><rect x="5.200" y="18" width="40.500" height="8" fill="#fff" stroke="#d8d8d8" stroke-width="0.400"/><rect x="5.600" y="28.600" width="19" height="0.700" fill="#bdbdbd"/><rect x="5.600" y="31" width="5.500" height="0.900" fill="#7a7a7a"/><rect x="12" y="31.100" width="10" height="0.700" fill="#ccc"/><rect x="26.500" y="35" width="5" height="1.600" fill="#5a94d4"/><rect x="32.600" y="35" width="5" height="1.600" fill="#5a94d4"/><clipPath id="cp2"><rect x="1.800" y="4.800" width="69" height="34.200"/></clipPath><g clip-path="url(#cp2)"><defs><radialGradient id="gl2" cx="0.52" cy="0.42" r="0.62"><stop offset="0" stop-color="#d4e8fa"/><stop offset="0.3" stop-color="#86b8ec"/><stop offset="0.6" stop-color="#3374cf"/><stop offset="0.84" stop-color="#173f9f"/><stop offset="1" stop-color="#0e2878"/></radialGradient></defs><circle cx="60.2" cy="31.5" r="12" fill="url(#gl2)"/><ellipse cx="60.80" cy="26.10" rx="6.00" ry="3.60" fill="#fff" opacity="0.55"/><circle cx="53.24" cy="29.10" r="1.32" fill="#6fd08a"/><circle cx="66.44" cy="38.70" r="3.60" fill="#fff" opacity="0.7"/><circle cx="66.44" cy="38.70" r="1.80" fill="#f4c84e"/></g><rect x="3" y="41.200" width="8" height="0.600" fill="#9bbbe0"/><rect x="20" y="41.200" width="14" height="0.600" fill="#9bbbe0"/><rect x="41" y="41.200" width="4" height="0.600" fill="#9bbbe0"/><rect x="47" y="41.200" width="3" height="0.600" fill="#9bbbe0"/><rect x="52" y="41.200" width="4" height="0.600" fill="#9bbbe0"/><rect x="58" y="41.200" width="3" height="0.600" fill="#9bbbe0"/><rect x="63" y="41.200" width="4" height="0.600" fill="#9bbbe0"/><rect x="68.500" y="41" width="1.600" height="0.900" fill="#e06a6a"/></svg>
<svg x="525" y="291.6" width="73.3" height="44.2" viewBox="0 0 73.3 44"><rect width="73.300" height="44" rx="1.500" fill="#f3f3f3"/><rect y="0" width="73.300" height="3.200" rx="1.200" fill="#666"/><rect x="6.0" y="1.300" width="3.400" height="0.600" fill="#cfcfcf"/><rect x="14.4" y="1.300" width="3.400" height="0.600" fill="#cfcfcf"/><rect x="22.8" y="1.300" width="3.400" height="0.600" fill="#cfcfcf"/><rect x="31.2" y="1.300" width="3.400" height="0.600" fill="#cfcfcf"/><rect x="39.6" y="1.300" width="3.400" height="0.600" fill="#cfcfcf"/><rect x="48.0" y="1.300" width="3.400" height="0.600" fill="#cfcfcf"/><rect x="56.4" y="1.300" width="3.400" height="0.600" fill="#cfcfcf"/><rect x="64.8" y="1.300" width="3.400" height="0.600" fill="#cfcfcf"/><rect x="0" y="3.200" width="73.300" height="6.800" fill="#efefef"/><rect x="0.500" y="6" width="27.500" height="1.500" fill="#6a6a6a"/><rect x="55" y="6.300" width="12" height="0.700" fill="#ddd"/><rect x="69" y="5.800" width="3.700" height="1.900" fill="#4a8bd0"/><rect x="0" y="10" width="73.300" height="27" fill="#fff"/><rect x="0.500" y="13.400" width="10" height="1.200" fill="#7a7a7a"/><circle cx="13.800" cy="14.100" r="1.400" fill="#3fbf4f"/><rect x="0.500" y="17.700" width="42" height="0.700" fill="#c8c8c8"/><rect x="12" y="21" width="3" height="0.700" fill="#cfcfcf"/><rect x="17" y="21" width="13" height="0.700" fill="#bdbdbd"/><rect x="8" y="23.200" width="7" height="0.700" fill="#cfcfcf"/><rect x="17" y="23.200" width="6" height="0.700" fill="#bdbdbd"/><rect x="8.300" y="27.600" width="12" height="1.700" rx="0.400" fill="#5a94d4"/><rect x="21.200" y="27.600" width="7.400" height="1.700" rx="0.400" fill="#5a94d4"/><clipPath id="cp3"><rect x="0" y="10" width="73.300" height="26.600"/></clipPath><g clip-path="url(#cp3)"><defs><radialGradient id="gl3" cx="0.52" cy="0.42" r="0.62"><stop offset="0" stop-color="#d4e8fa"/><stop offset="0.3" stop-color="#86b8ec"/><stop offset="0.6" stop-color="#3374cf"/><stop offset="0.84" stop-color="#173f9f"/><stop offset="1" stop-color="#0e2878"/></radialGradient></defs><circle cx="62.3" cy="26.5" r="13" fill="url(#gl3)"/><ellipse cx="62.95" cy="20.65" rx="6.50" ry="3.90" fill="#fff" opacity="0.55"/><circle cx="54.76" cy="23.90" r="1.43" fill="#6fd08a"/><circle cx="69.06" cy="34.30" r="3.90" fill="#fff" opacity="0.7"/><circle cx="69.06" cy="34.30" r="1.95" fill="#f4c84e"/></g><rect x="0.500" y="40.200" width="9" height="0.600" fill="#9bbbe0"/><rect x="16" y="40.200" width="16" height="0.600" fill="#6f9fd6"/><rect x="41" y="40.200" width="4" height="0.600" fill="#9bbbe0"/><rect x="48" y="40.200" width="3" height="0.600" fill="#9bbbe0"/><rect x="54" y="40.200" width="4" height="0.600" fill="#9bbbe0"/><rect x="60" y="40.200" width="4" height="0.600" fill="#9bbbe0"/><rect x="67" y="40.200" width="4" height="0.600" fill="#9bbbe0"/></svg>
<rect x="149.3" y="429.7" width="565.7" height="55.3" fill="#fff" stroke="#f1f1f1" stroke-width="0.5"/>
<text x="20.4" y="27.13" font-size="6.6" fill="#fff" font-weight="700" text-anchor="middle">K</text>
<text x="20.4" y="65.45" font-size="5.0" fill="#e4e4e6" stroke="#e4e4e6" stroke-width="0.11" text-anchor="middle" textLength="25">Dashboard</text>
<text x="20.4" y="94.85" font-size="5.0" fill="#e4e4e6" stroke="#e4e4e6" stroke-width="0.11" text-anchor="middle" textLength="11">Alert</text>
<text x="20.4" y="124.45" font-size="5.0" fill="#e4e4e6" stroke="#e4e4e6" stroke-width="0.11" text-anchor="middle" textLength="18.4">Reports</text>
<text x="20.4" y="153.95" font-size="5.0" fill="#e4e4e6" stroke="#e4e4e6" stroke-width="0.11" text-anchor="middle" textLength="21.9">Inventory</text>
<text x="20.4" y="183.35" font-size="5.0" fill="#e4e4e6" stroke="#e4e4e6" stroke-width="0.11" text-anchor="middle" textLength="17.6">Policies</text>
<text x="20.4" y="212.95" font-size="5.0" fill="#e4e4e6" stroke="#e4e4e6" stroke-width="0.11" text-anchor="middle" textLength="25.2">Integration</text>
<text x="20.4" y="242.55" font-size="5.0" fill="#e4e4e6" stroke="#e4e4e6" stroke-width="0.11" text-anchor="middle" textLength="11.2">Logs</text>
<text x="20.4" y="415.65" font-size="5.0" fill="#fff" stroke="#fff" stroke-width="0.11" text-anchor="middle" textLength="15.1">Admin</text>
<text x="20.4" y="453.45" font-size="5.0" fill="#e4e4e6" stroke="#e4e4e6" stroke-width="0.11" text-anchor="middle" textLength="17">Setting</text>
<text x="47.0" y="25.47" font-size="8.4" fill="#1c1c1c" stroke="#1c1c1c" stroke-width="0.5" stroke-linejoin="round" textLength="54.8">Administration</text>
<text x="60.7" y="47.51" font-size="4.9" fill="#6c6c6c" stroke="#6c6c6c" stroke-width="0.11" textLength="38">MANAGEMENT</text>
<text x="54.8" y="67.71" font-size="7.1" fill="#4c4c4c" stroke="#4c4c4c" stroke-width="0.16" textLength="63.8">Users Management</text>
<text x="54.8" y="89.31" font-size="7.1" fill="#4c4c4c" stroke="#4c4c4c" stroke-width="0.16" textLength="68.5">Groups Management</text>
<text x="54.8" y="111.01" font-size="7.1" fill="#4c4c4c" stroke="#4c4c4c" stroke-width="0.16" textLength="32.8">Endpoints</text>
<text x="60.7" y="141.91" font-size="4.9" fill="#6c6c6c" stroke="#6c6c6c" stroke-width="0.11" textLength="13">MDM</text>
<text x="54.8" y="162.01" font-size="7.1" fill="#5b50d6" stroke="#5b50d6" stroke-width="0.16" textLength="52.8">Push Certificate</text>
<text x="54.8" y="183.91" font-size="7.1" fill="#4c4c4c" stroke="#4c4c4c" stroke-width="0.16" textLength="13.6">DEP</text>
<text x="60.7" y="214.71" font-size="4.9" fill="#6c6c6c" stroke="#6c6c6c" stroke-width="0.11" textLength="13.5">ZTPA</text>
<text x="54.8" y="234.91" font-size="7.1" fill="#4c4c4c" stroke="#4c4c4c" stroke-width="0.16" textLength="40.6">ZTPA Server</text>
<text x="60.7" y="266.01" font-size="4.9" fill="#6c6c6c" stroke="#6c6c6c" stroke-width="0.11" textLength="24.2">REPORTS</text>
<text x="54.8" y="286.31" font-size="7.1" fill="#4c4c4c" stroke="#4c4c4c" stroke-width="0.16" textLength="45">Email Reports</text>
<text x="60.7" y="317.41" font-size="4.9" fill="#6c6c6c" stroke="#6c6c6c" stroke-width="0.11" textLength="20.5">BILLING</text>
<text x="54.8" y="337.31" font-size="7.1" fill="#4c4c4c" stroke="#4c4c4c" stroke-width="0.16" textLength="53">Payment Details</text>
<text x="54.8" y="361.11" font-size="7.1" fill="#4c4c4c" stroke="#4c4c4c" stroke-width="0.16" textLength="54.2">Payment History</text>
<text x="175.2" y="19.15" font-size="6.1" fill="#5b50d6" stroke="#5b50d6" stroke-width="0.13" textLength="15">Acme</text>
<text x="599.8" y="19.76" font-size="7.8" fill="#fff" stroke="#fff" stroke-width="0.47" stroke-linejoin="round" text-anchor="middle" textLength="10.6">AH</text>
<text x="616.1" y="19.37" font-size="7.0" fill="#1c1c1c" stroke="#1c1c1c" stroke-width="0.42" stroke-linejoin="round" textLength="66">Amanda Haydenson</text>
<text x="169.2" y="53.35" font-size="6.8" fill="#8a8a8a" stroke="#8a8a8a" stroke-width="0.15" textLength="47">Administration</text>
<text x="238.8" y="53.35" font-size="6.8" fill="#8a8a8a" stroke="#8a8a8a" stroke-width="0.15" textLength="53">Push Certificate</text>
<text x="314" y="53.42" font-size="7.0" fill="#222" stroke="#222" stroke-width="0.42" stroke-linejoin="round" textLength="66.6">Add New Certificate</text>
<text x="157.2" y="76.62" font-size="12.0" fill="#151515" stroke="#151515" stroke-width="0.72" stroke-linejoin="round" textLength="108.8">Add New Certificate</text>
<text x="157.2" y="90.3" font-size="6.4" fill="#4c4c4c" stroke="#4c4c4c" stroke-width="0.14" textLength="289.4" xml:space="preserve">Use the following steps to configure your account with a Push Notification Certificate  issued by</text>
<text x="157.2" y="99.3" font-size="6.4" fill="#4c4c4c" stroke="#4c4c4c" stroke-width="0.14" textLength="210.8">Apple. This step is mandatory before you can start managing devices.</text>
<text x="254.5" y="136.59" font-size="7.2" fill="#fff" stroke="#fff" stroke-width="0.16" text-anchor="middle">1</text>
<text x="430.2" y="136.59" font-size="7.2" fill="#fff" stroke="#fff" stroke-width="0.16" text-anchor="middle">2</text>
<text x="605.7" y="136.59" font-size="7.2" fill="#666" stroke="#666" stroke-width="0.16" text-anchor="middle">3</text>
<text x="254.9" y="155.02" font-size="7.0" fill="#222" stroke="#222" stroke-width="0.42" stroke-linejoin="round" text-anchor="middle" textLength="48.7">Download CSR</text>
<text x="254.9" y="163.56" font-size="6.0" fill="#5c5c5c" stroke="#5c5c5c" stroke-width="0.13" text-anchor="middle" textLength="105.5">Download Certificate Signing Request</text>
<text x="430.2" y="155.02" font-size="7.0" fill="#222" stroke="#222" stroke-width="0.42" stroke-linejoin="round" text-anchor="middle" textLength="83">Create a Push Certificate</text>
<text x="430.2" y="163.56" font-size="6.0" fill="#5c5c5c" stroke="#5c5c5c" stroke-width="0.13" text-anchor="middle" textLength="109">Create APNs Certificate in Apple portal</text>
<text x="605.8" y="155.02" font-size="7.0" fill="#222" stroke="#222" stroke-width="0.42" stroke-linejoin="round" text-anchor="middle" textLength="60.4">Upload Certificate</text>
<text x="605.8" y="163.56" font-size="6.0" fill="#5c5c5c" stroke="#5c5c5c" stroke-width="0.13" text-anchor="middle" textLength="100.2">Upload Push Notification Certificate</text>
<text x="176.8" y="221.41" font-size="9.2" fill="#151515" stroke="#151515" stroke-width="0.55" stroke-linejoin="round" textLength="104.2">Create a Push Certificate</text>
<text x="176.8" y="235.8" font-size="6.4" fill="#4c4c4c" stroke="#4c4c4c" stroke-width="0.14" textLength="263.4" xml:space="preserve">Use the following steps to create an  APNs certificate in the Push Certificate Portal. We</text>
<text x="176.8" y="244.6" font-size="6.4" fill="#4c4c4c" stroke="#4c4c4c" stroke-width="0.14" textLength="176">recommend that a common account Apple ID for this step.</text>
<text x="184" y="265.68" font-size="6.6" fill="#5078cc" stroke="#5078cc" stroke-width="0.15" textLength="91">Apple Push Certificate Portal</text>
<text x="248.8" y="310.92" font-size="7.0" fill="#1c1c1c" stroke="#1c1c1c" stroke-width="0.42" stroke-linejoin="round" textLength="20">Step 1</text>
<text x="248.8" y="322.24" font-size="6.5" fill="#2e2e2e" stroke="#2e2e2e" stroke-width="0.14" textLength="59.2">Create a Certificate</text>
<text x="426.7" y="306.42" font-size="7.0" fill="#1c1c1c" stroke="#1c1c1c" stroke-width="0.42" stroke-linejoin="round" textLength="21">Step 2</text>
<text x="426.7" y="317.74" font-size="6.5" fill="#2e2e2e" stroke="#2e2e2e" stroke-width="0.14" textLength="73">Click to Choose File and</text>
<text x="426.7" y="326.74" font-size="6.5" fill="#2e2e2e" stroke="#2e2e2e" stroke-width="0.14" textLength="48">Upload the CSR</text>
<text x="604.7" y="306.42" font-size="7.0" fill="#1c1c1c" stroke="#1c1c1c" stroke-width="0.42" stroke-linejoin="round" textLength="21.2">Step 3</text>
<text x="604.7" y="317.74" font-size="6.5" fill="#2e2e2e" stroke="#2e2e2e" stroke-width="0.14" textLength="85.2">Click download to download</text>
<text x="604.7" y="326.74" font-size="6.5" fill="#2e2e2e" stroke="#2e2e2e" stroke-width="0.14" textLength="49">APNs certificate</text>
</g></svg></div>
</body></html>
